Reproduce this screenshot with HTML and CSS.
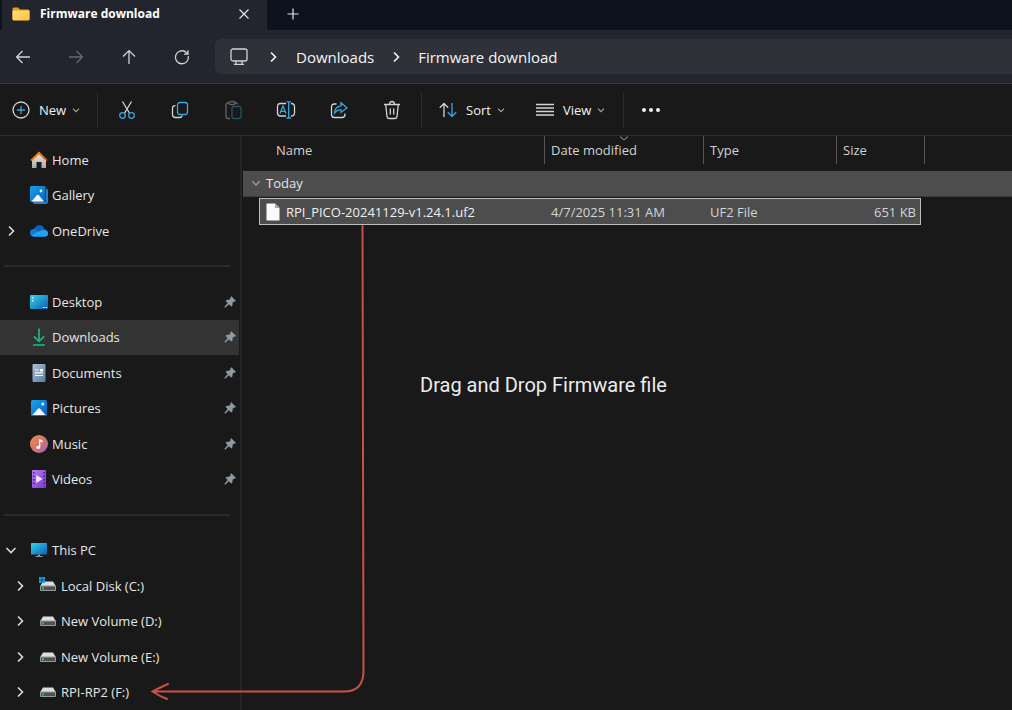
FILE: index.html
```html
<!DOCTYPE html>
<html lang="en">
<head>
<meta charset="utf-8">
<title>Firmware download</title>
<link rel="stylesheet" href="styles.css">
</head>
<body>
<svg class="defs" aria-hidden="true">
  <defs>
    <linearGradient id="g-folder" x1="0" y1="0" x2="1" y2="1"><stop offset="0" stop-color="#ffe08a"/><stop offset="1" stop-color="#ffc22e"/></linearGradient>
    <linearGradient id="g-roof" x1="0" y1="0" x2="1" y2="1"><stop offset="0" stop-color="#f9a01b"/><stop offset="1" stop-color="#d8480e"/></linearGradient>
    <linearGradient id="g-wall" x1="0" y1="0" x2="0" y2="1"><stop offset="0" stop-color="#e8e8e8"/><stop offset="1" stop-color="#a9a9a9"/></linearGradient>
    <linearGradient id="g-pic" x1="0" y1="0" x2="1" y2="1"><stop offset="0" stop-color="#1ba1ec"/><stop offset="1" stop-color="#0763bd"/></linearGradient>
    <linearGradient id="g-desk" x1="0" y1="0" x2="1" y2="1"><stop offset="0" stop-color="#35d3e8"/><stop offset="1" stop-color="#0b5fb8"/></linearGradient>
    <linearGradient id="g-down" x1="0" y1="0" x2="0" y2="1"><stop offset="0" stop-color="#2fd07f"/><stop offset="1" stop-color="#12a594"/></linearGradient>
    <linearGradient id="g-doc" x1="0" y1="0" x2="1" y2="1"><stop offset="0" stop-color="#a9bfd4"/><stop offset="1" stop-color="#5c7c9e"/></linearGradient>
    <linearGradient id="g-music" x1="0" y1="0" x2="1" y2="1"><stop offset="0" stop-color="#f28a55"/><stop offset="0.5" stop-color="#d87468"/><stop offset="1" stop-color="#9a62c4"/></linearGradient>
    <linearGradient id="g-video" x1="0" y1="0" x2="1" y2="1"><stop offset="0" stop-color="#b77cf2"/><stop offset="1" stop-color="#7a35d6"/></linearGradient>
    <symbol id="chev-right" viewBox="0 0 12 12"><path d="M4 1.5 8.5 6 4 10.500" fill="none" stroke="currentColor" stroke-width="1.600"/></symbol>
    <symbol id="chev-down" viewBox="0 0 12 12"><path d="M1.500 4 6 8.500 10.500 4" fill="none" stroke="currentColor" stroke-width="1.600"/></symbol>
    <symbol id="pin" viewBox="0 0 12 12"><path d="M7.300 0.600 11.600 4.800 10.700 5.600 10 5.300 8.300 7.100 8.200 9.400 7.200 10.300 4.900 8.100 1.200 11.400 0.600 10.900 3.900 7.100 1.800 5 2.700 4.100 5.100 4 6.900 2.200 6.500 1.400Z" fill="#8f9ba3" stroke="#8f9ba3" stroke-width="0.500"/></symbol>
    <symbol id="drive" viewBox="0 0 18 18"><path d="M4 4.500H14L17 9.500H1Z" fill="#dcdde0"/><rect x="1" y="8.500" width="16" height="5.500" rx="1" fill="#9a9a9a"/><rect x="2" y="9.500" width="14" height="3.500" fill="#4f5150"/><rect x="3" y="10.300" width="2" height="2" fill="#35c948"/></symbol>
    <symbol id="picture" viewBox="0 0 18 18"><rect x="1" y="1" width="16" height="16" rx="1.500" fill="url(#g-pic)"/><circle cx="12.800" cy="5" r="1.500" fill="#d8efff"/><path d="M2.500 16 8.200 9.600Q9 8.800 9.800 9.600L15.500 16Z" fill="#f3f9ff"/></symbol>
  </defs>
</svg>

<header class="tabs">
  <div class="tab">
    <svg class="folder" width="18" height="14" viewBox="0 0 18 14"><path d="M0.500 2Q0.500 0.500 2 0.500H6L8 2.500H16Q17.500 2.500 17.500 4V12H0.500Z" fill="#e8a010"/><rect x="0.500" y="3.500" width="17" height="10" rx="1" fill="url(#g-folder)"/></svg>
    <span class="tab-title">Firmware download</span>
    <button class="plain tab-close" aria-label="Close tab"><svg width="12" height="12" viewBox="0 0 12 12"><path d="M1.500 1.500 10.500 10.500M10.500 1.500 1.500 10.500" stroke="#e4e4e4" stroke-width="1.200"/></svg></button>
  </div>
  <button class="plain tab-new" aria-label="New tab"><svg width="12" height="12" viewBox="0 0 12 12"><path d="M6 0.500V11.500M0.500 6H11.500" stroke="#e4e4e4" stroke-width="1.200"/></svg></button>
</header>

<nav class="nav" aria-label="Navigation">
  <div class="nav-buttons">
    <button class="plain nav-btn" aria-label="Back"><svg width="16" height="16" viewBox="0 0 16 16" class="line"><path d="M15 8H2M7.500 2 1.600 8 7.500 14"/></svg></button>
    <button class="plain nav-btn dim" aria-label="Forward"><svg width="16" height="16" viewBox="0 0 16 16" class="line"><path d="M1 8H14M8.500 2 14.400 8 8.500 14"/></svg></button>
    <button class="plain nav-btn" aria-label="Up"><svg width="16" height="16" viewBox="0 0 16 16" class="line"><path d="M8 15V2M2 7.500 8 1.600 14 7.500"/></svg></button>
    <button class="plain nav-btn" aria-label="Refresh"><svg width="16" height="16" viewBox="0 0 16 16" class="line"><path d="M14.300 7A6.500 6.500 0 1 1 11.600 2.900L14 5.200M14 1.200V5.200H10"/></svg></button>
  </div>
  <div class="address">
    <svg class="monitor line" width="18" height="18" viewBox="0 0 18 18"><rect x="1" y="1" width="16" height="12" rx="2"/><path d="M6 13V16M12 13V16M4 16.300H14"/></svg>
    <svg class="crumb-chev" width="12" height="12"><use href="#chev-right"/></svg>
    <a class="crumb" href="#">Downloads</a>
    <svg class="crumb-chev" width="12" height="12"><use href="#chev-right"/></svg>
    <a class="crumb" href="#">Firmware download</a>
  </div>
</nav>

<div class="toolbar" role="toolbar">
  <button class="plain tool-new"><svg width="18" height="18" viewBox="0 0 18 18" class="line"><circle cx="9" cy="9" r="8"/><path class="blue" d="M9 5V13M5 9H13"/></svg><span>New</span><svg class="caret" width="8" height="8"><use href="#chev-down"/></svg></button>
  <div class="tool-icons">
    <button class="plain tool" aria-label="Cut"><svg width="18" height="20" viewBox="0 0 18 20" class="line"><path d="M4.500 1.500 11.700 13.500M13.500 1.500 6.300 13.500"/><circle class="blue" cx="4.500" cy="15.500" r="2.800"/><circle class="blue" cx="13.500" cy="15.500" r="2.800"/></svg></button>
    <button class="plain tool" aria-label="Copy"><svg width="18" height="18" viewBox="0 0 18 18" class="line"><path d="M4.500 4.700H4Q1.500 4.700 1.500 7.200V13.500Q1.500 16.500 4.500 16.500H8.500Q10.800 16.500 11 14.500"/><rect class="blue" x="6.500" y="1.500" width="10" height="12" rx="2.500"/></svg></button>
    <button class="plain tool dim" aria-label="Paste"><svg width="18" height="20" viewBox="0 0 18 20" class="line"><path d="M6 18.500H4Q2 18.500 2 16.500V5Q2 3 4 3H5M11 3H12Q13.500 3 13.500 4.500"/><rect x="5" y="1.500" width="6" height="3" rx="1.500"/><rect class="blue" x="8" y="6.500" width="9" height="12" rx="2"/></svg></button>
    <button class="plain tool" aria-label="Rename"><svg width="20" height="18" viewBox="0 0 20 18" class="line"><path d="M10 2.500H4.500Q1.500 2.500 1.500 5.500V12Q1.500 15 4.500 15H10M15 2.500Q18.500 2.500 18.500 5.500V12Q18.500 15 15 15"/><path class="blue" d="M10.500 0.800H15M12.700 0.800V17M10.500 17H15M4 12.500 7 5 10 12.500M5 10.300H9"/></svg></button>
    <button class="plain tool" aria-label="Share"><svg width="18" height="18" viewBox="0 0 18 18" class="line"><path d="M6.500 3H4.500Q1.500 3 1.500 6V13.500Q1.500 16.500 4.500 16.500H12Q15 16.500 15 13.500V12.500"/><path class="blue" d="M11 1.800 17 6.700 11 11.500V8.800Q7 8.600 4.500 12Q5 5.500 11 4.800Z"/></svg></button>
    <button class="plain tool" aria-label="Delete"><svg width="18" height="20" viewBox="0 0 18 20" class="line"><path d="M1 4.500H17M6.500 4.500Q6.500 1.500 9 1.500Q11.500 1.500 11.500 4.500M2.700 4.500 4 16.500Q4.200 18.500 6 18.500H12Q13.800 18.500 14 16.500L15.300 4.500M7.300 8.500V14.500M10.700 8.500V14.500"/></svg></button>
  </div>
  <div class="tool-menus">
    <button class="plain tool-menu"><svg width="18" height="16" viewBox="0 0 18 16" class="line"><path d="M5 15V1.500M0.800 5.700 5 1.500 9.200 5.700"/><path class="blue" d="M13 1V14.500M8.800 10.300 13 14.500 17.200 10.300"/></svg><span>Sort</span><svg class="caret" width="8" height="8"><use href="#chev-down"/></svg></button>
    <button class="plain tool-menu"><svg width="18" height="14" viewBox="0 0 18 14" class="line"><path d="M0 1.500H18M0 5H18M0 8.500H18M0 12H18"/></svg><span>View</span><svg class="caret" width="8" height="8"><use href="#chev-down"/></svg></button>
  </div>
  <button class="plain tool-more" aria-label="See more"><svg width="18" height="6" viewBox="0 0 18 6" fill="#f0f0f0"><circle cx="2" cy="3" r="2"/><circle cx="9" cy="3" r="2"/><circle cx="16" cy="3" r="2"/></svg></button>
</div>

<main class="main">
  <aside class="side">
    <a class="item" href="#"><span class="twist"></span><svg class="ico" viewBox="0 0 18 18"><path d="M2 8 9 2.500 16 8V17H11.500V11H6.500V17H2Z" fill="url(#g-wall)"/><path d="M0.500 8.700 9 0.500 17.500 8.700 16.500 10.200 9 3.500 1.500 10.200Z" fill="url(#g-roof)"/></svg>Home</a>
    <a class="item" href="#"><span class="twist"></span><svg class="ico" viewBox="0 0 18 18"><path d="M16 3H16.500Q18 3 18 4.500V15.500Q18 18 15.500 18H4.500Q3 18 3 16.500V16H16Z" fill="#2b7fc8"/><rect width="15.500" height="16" rx="1.500" fill="url(#g-pic)"/><circle cx="11" cy="5" r="1.400" fill="#e6f5ff"/><path d="M1.500 15.500 7 9Q7.800 8.300 8.600 9L14 15.500Z" fill="#f3f9ff"/></svg>Gallery</a>
    <a class="item" href="#"><span class="twist"><svg width="12" height="12"><use href="#chev-right"/></svg></span><svg class="ico" viewBox="0 0 18 18"><path d="M4 7Q6 3 9.500 3Q13 3 14.200 7Q18 8 18 11Q18 14.500 15 14.500H4Q0 14.500 0 10.500Q0 7.500 4 7Z" fill="#0a63bd"/><path d="M0 10.500Q0 7 4.500 7L16 13.800 15 14.500H4Q0 14.500 0 10.500Z" fill="#0f7ad8"/><path d="M1.500 13.300 10 9Q13 7.500 15.500 8.200Q18 9 18 11.300Q18 14.500 15 14.500H4Q2.500 14.300 1.500 13.300Z" fill="#27a3ee"/></svg>OneDrive</a>
    <hr class="rule">
    <a class="item" href="#"><span class="twist"></span><svg class="ico" viewBox="0 0 18 18"><rect y="2" width="18" height="14" rx="1" fill="url(#g-desk)"/><path d="M2 4H3.500V5.500H2ZM2 7H3.500V8.500H2ZM13 14H14.500V15H13ZM15.500 14H17V15H15.500Z" fill="#e9fbff"/></svg>Desktop<svg class="pin" width="12" height="12"><use href="#pin"/></svg></a>
    <a class="item current" href="#"><span class="twist"></span><svg class="ico" viewBox="0 0 18 18"><path d="M4 8.500 9 13.500 14 8.500" fill="none" stroke="url(#g-down)" stroke-width="1.600"/><rect x="3" y="16.200" width="12" height="1.600" fill="#16b487"/><rect x="8.200" y="0.500" width="1.600" height="12" fill="#1fbf86"/></svg>Downloads<svg class="pin" width="12" height="12"><use href="#pin"/></svg></a>
    <a class="item" href="#"><span class="twist"></span><svg class="ico" viewBox="0 0 18 18"><rect x="2.500" width="13" height="18" rx="1" fill="url(#g-doc)"/><path d="M5 6H9M5 8.800H13M5 11.500H13" stroke="#f4f8fc" stroke-width="1.200"/><rect x="10" y="5" width="3" height="2.500" fill="#fff"/></svg>Documents<svg class="pin" width="12" height="12"><use href="#pin"/></svg></a>
    <a class="item" href="#"><span class="twist"></span><svg class="ico"><use href="#picture"/></svg>Pictures<svg class="pin" width="12" height="12"><use href="#pin"/></svg></a>
    <a class="item" href="#"><span class="twist"></span><svg class="ico" viewBox="0 0 18 18"><circle cx="9" cy="9" r="9" fill="url(#g-music)"/><path d="M9 4 12.500 5.300V7.500L10.300 6.800V12Q10.300 14 8.300 14Q6.200 14 6.200 12.400Q6.200 10.800 9 10.800Z" fill="#fff"/></svg>Music<svg class="pin" width="12" height="12"><use href="#pin"/></svg></a>
    <a class="item" href="#"><span class="twist"></span><svg class="ico" viewBox="0 0 18 18"><rect x="2" width="14" height="18" rx="1" fill="url(#g-video)"/><path d="M3.800 2V16M14.200 2V16" stroke="#4a1f8e" stroke-width="1.500" stroke-dasharray="1.500 2"/><path d="M6.200 5 12.600 9 6.200 13Z" fill="#f2eaff"/></svg>Videos<svg class="pin" width="12" height="12"><use href="#pin"/></svg></a>
    <hr class="rule">
    <a class="item" href="#"><span class="twist"><svg width="12" height="12"><use href="#chev-down"/></svg></span><svg class="ico" viewBox="0 0 18 18"><rect x="1" y="2" width="16" height="11.500" rx="0.500" fill="url(#g-desk)"/><path d="M8 13.500H10V15H12.500V16H5.500V15H8Z" fill="#8a979f"/></svg>This PC</a>
    <a class="item child" href="#"><span class="twist"><svg width="12" height="12"><use href="#chev-right"/></svg></span><svg class="ico" viewBox="0 0 18 18"><path d="M4 4.500H14L17 9.500H1Z" fill="#dcdde0"/><rect x="1" y="8.500" width="16" height="5.500" rx="1" fill="#9a9a9a"/><rect x="2" y="9.500" width="14" height="3.500" fill="#4f5150"/><rect x="3" y="10.300" width="2" height="2" fill="#35c948"/><path d="M0 0H2.700V2.700H0ZM3.300 0H6V2.700H3.300ZM0 3.300H2.700V6H0ZM3.300 3.300H6V6H3.300Z" fill="#18a0ee"/></svg>Local Disk (C:)</a>
    <a class="item child" href="#"><span class="twist"><svg width="12" height="12"><use href="#chev-right"/></svg></span><svg class="ico"><use href="#drive"/></svg>New Volume (D:)</a>
    <a class="item child" href="#"><span class="twist"><svg width="12" height="12"><use href="#chev-right"/></svg></span><svg class="ico"><use href="#drive"/></svg>New Volume (E:)</a>
    <a class="item child" href="#"><span class="twist"><svg width="12" height="12"><use href="#chev-right"/></svg></span><svg class="ico"><use href="#drive"/></svg>RPI-RP2 (F:)</a>
  </aside>
  <section class="files">
    <table class="list">
      <colgroup><col class="c-gutter"><col class="c-name"><col class="c-date"><col class="c-type"><col class="c-size"><col class="c-edge"><col></colgroup>
      <thead>
        <tr>
          <th colspan="2"><div class="head head-name">Name</div></th>
          <th><div class="head">Date modified<svg class="sorted" width="10" height="5" viewBox="0 0 10 5"><path d="M1 0.500 5 4 9 0.500" fill="none" stroke="#a0a0a0"/></svg></div></th>
          <th><div class="head">Type</div></th>
          <th colspan="2"><div class="head">Size</div></th>
          <td></td>
        </tr>
      </thead>
      <tbody>
        <tr class="group"><th colspan="7"><button class="plain group-btn"><svg width="10" height="10"><use href="#chev-down"/></svg>Today</button></th></tr>
        <tr class="space"><td colspan="7"></td></tr>
        <tr class="file">
          <td></td>
          <td class="cell first"><div class="file-name"><svg width="14" height="18" viewBox="0 0 14 18"><path d="M0.500 0.500H9L13.500 5V17.500H0.500Z" fill="#fafafa"/><path d="M9 0.500V5H13.500Z" fill="#a8a8a8"/></svg>RPI_PICO-20241129-v1.24.1.uf2</div></td>
          <td class="cell">4/7/2025 11:31 AM</td>
          <td class="cell">UF2 File</td>
          <td class="cell last">651 KB</td>
          <td></td><td></td>
        </tr>
      </tbody>
    </table>
    <p class="note">Drag and Drop Firmware file</p>
  </section>
  <svg class="arrow" width="216" height="480" viewBox="0 0 216 480"><path d="M212.500 1 213.500 446Q213.500 466.500 194 466.500H3M18 459Q9 463 2.500 466.500Q9 471 17 474"/></svg>
</main>
</body>
</html>
```

FILE: styles.css
```css
* { box-sizing: border-box; }

body {
  margin: 0;
  min-height: 100vh;
  display: flex;
  flex-direction: column;
  background: #191919;
  color: #e6e6e6;
  font: 13px/20px "Open Sans", "Noto Sans", sans-serif;
  overflow-x: hidden;
}

svg { display: block; flex: none; }
a { color: inherit; text-decoration: none; }
.defs { position: absolute; width: 0; height: 0; }

.plain {
  display: flex;
  align-items: center;
  padding: 0;
  border: 0;
  background: none;
  color: inherit;
  font: inherit;
}

.line { fill: none; stroke: #d2d3d5; stroke-width: 1.3; }
.line .blue { stroke: #3aa5dc; }
.dim { opacity: 0.4; }

/* Tab strip */
.tabs {
  display: flex;
  height: 30px;
  padding-left: 2px;
  background: #0c121e;
}
.tab {
  display: flex;
  align-items: center;
  width: 265px;
  padding: 0 17px 3px 10px;
  background: #22252d;
}
.tab-title {
  flex: 1;
  margin-left: 10px;
  color: #fff;
  font-size: 12px;
  font-weight: 700;
}
.tab-new { margin-left: 20px; padding-bottom: 3px; }

/* Navigation */
.nav {
  display: flex;
  align-items: center;
  height: 54px;
  padding-left: 6px;
  background: #22252d;
  border-bottom: 1px solid #36373b;
}
.nav-buttons { display: flex; gap: 20px; }
.nav-btn { width: 33px; height: 33px; justify-content: center; }
.address {
  display: flex;
  flex: 1;
  align-items: center;
  height: 35px;
  margin-left: 17px;
  padding-left: 15px;
  border-radius: 6px 0 0 6px;
  background: #2e3138;
  color: #f5f5f5;
  font-size: 15px;
}
.crumb-chev { margin: 0 16px; }
.monitor + .crumb-chev { margin: 0 17px 0 19px; }

/* Command bar */
.toolbar {
  display: flex;
  align-items: center;
  height: 52px;
  padding: 1px 0 0 12px;
  border-bottom: 1px solid #2c2c2c;
  color: #f2f2f2;
}
.tool-new span { margin: 0 6px 0 9px; }
.caret { color: #a8a8a8; }
.tool-new, .tool-icons, .tool-menus { height: 36px; border-right: 1px solid #2b2b2b; }
.tool-new { width: 86px; }
.tool-icons { display: flex; align-items: center; gap: 20px; padding: 0 13px 0 12px; }
.tool { width: 33px; height: 33px; justify-content: center; }
.tool-menus { display: flex; gap: 31px; padding: 0 18px 0 17px; }
.tool-menu span { margin: 0 6px 0 9px; }
.tool-more { margin-left: 18px; }

/* Body */
.main { position: relative; display: flex; flex: 1; }
.side {
  display: grid;
  grid-auto-rows: minmax(32px, 36px);
  width: 242px;
  height: calc(100vh - 136px);
  padding-top: 6px;
  border-right: 2px solid #242424;
}
.item {
  display: flex;
  align-items: center;
  margin-right: 1px;
  padding: 0 3px 0 5px;
}
.item.current { background: #333; }
.item.child { padding-left: 14px; }
.twist { width: 25px; color: #dcdcdc; }
.ico { width: 18px; height: 18px; margin-right: 4px; }
.pin { margin-left: auto; }
.rule {
  width: 226px;
  height: 2px;
  margin: 0 0 0 4px;
  align-self: center;
  border: 0;
  background: #2a2a2a;
}

/* File list */
.files { flex: 1; min-width: 0; padding-left: 1px; }
.list { width: 100%; table-layout: fixed; border-collapse: separate; border-spacing: 0; }
.list th, .list td { padding: 0; font-weight: 400; text-align: left; }
.c-gutter { width: 16px; }
.c-name { width: 286px; }
.c-date { width: 159px; }
.c-type { width: 133px; }
.c-size { width: 84px; }
.c-edge { width: 4px; }
.head {
  position: relative;
  height: 28px;
  margin-bottom: 7px;
  padding: 4px 0 4px 6px;
  border-right: 1px solid #565656;
  color: #d2d2d2;
}
.head-name { padding-left: 33px; }
.sorted { position: absolute; top: 0; left: 74px; }
.group th { height: 26px; background: #4d4d4d; border-bottom: 1px solid #3c3c3c; }
.group .group-btn { gap: 5px; margin-left: 8px; padding-bottom: 2px; }
.group-btn svg { color: #9c9c9c; }
.space td { height: 1px; }
.list .cell {
  height: 27px;
  padding-left: 6px;
  border: solid #bdbdbd;
  border-width: 1px 0;
  background: #4d4d4d;
  color: #d4d4d4;
}
.list .first { border-left-width: 1px; color: #f0f0f0; }
.list .last { border-right-width: 1px; padding-right: 4px; text-align: right; }
.file-name { display: flex; align-items: center; gap: 6px; }
.note {
  margin: 146px 0 0 177px;
  color: #ececec;
  font: 20px/28px Roboto, sans-serif;
}

/* Pointer from the file to the drive */
.arrow {
  position: absolute;
  top: 89px;
  left: 150px;
  fill: none;
  stroke: #cb4f4a;
  stroke-width: 2;
  stroke-linecap: round;
}
```
